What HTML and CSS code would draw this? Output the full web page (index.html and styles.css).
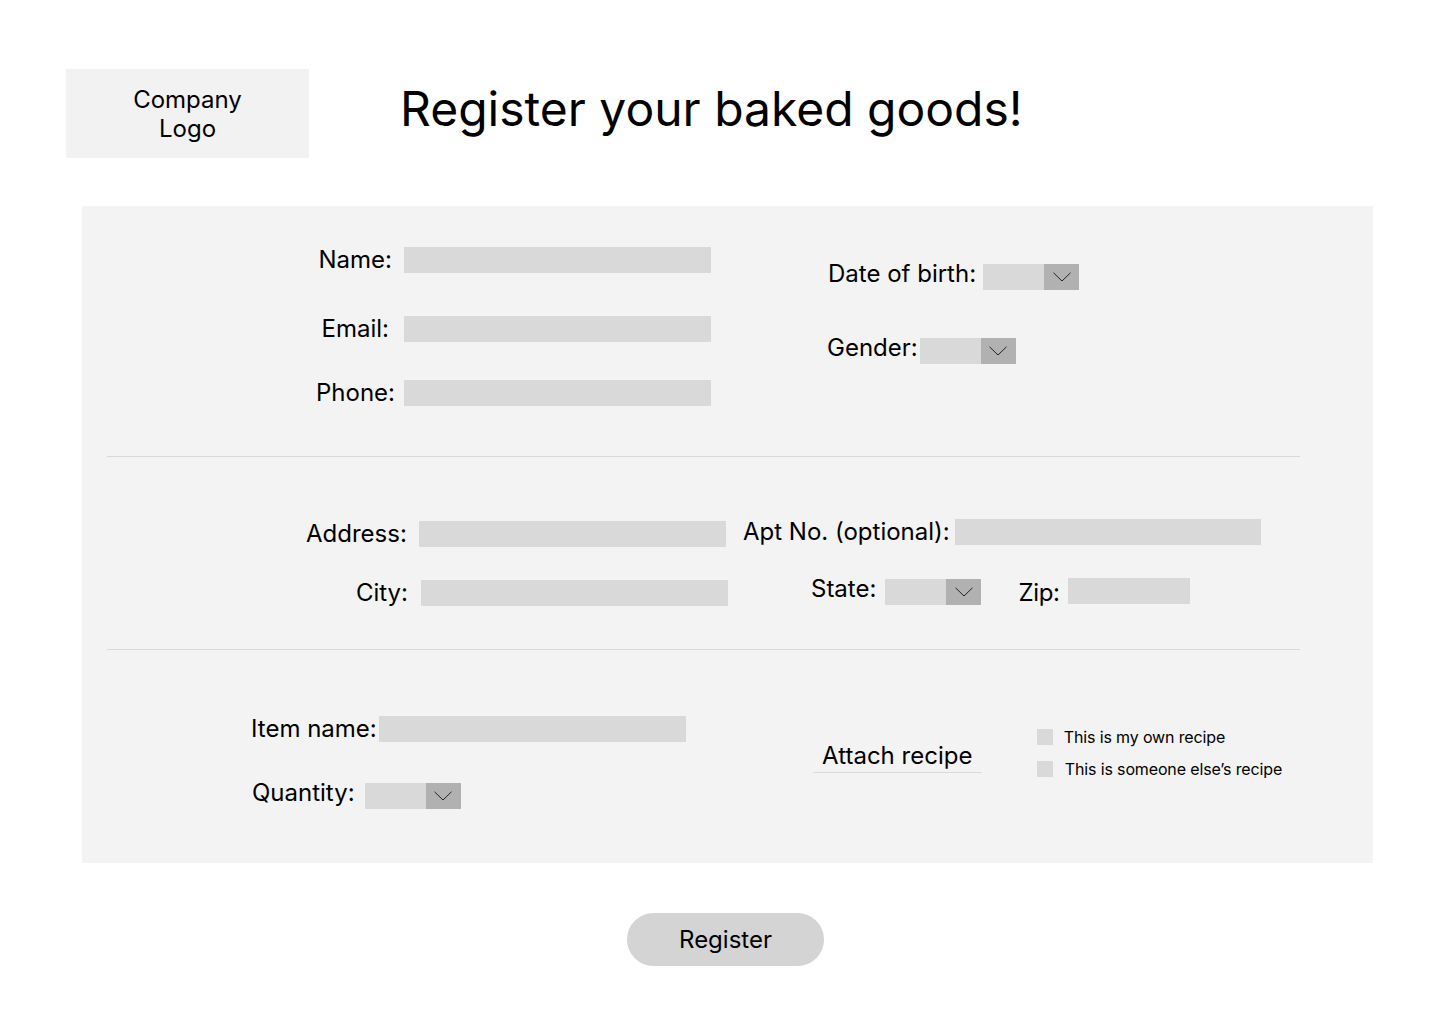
FILE: index.html
```html
<!DOCTYPE html>
<html lang="en">
<head>
<meta charset="utf-8">
<title>Register your baked goods!</title>
<link rel="stylesheet" href="styles.css">
</head>
<body>
<header class="header">
  <div class="logo">Company<br>Logo</div>
  <h1 class="title">Register your baked goods!</h1>
</header>

<main class="panel">
  <section class="sec1">
    <div class="contact-grid">
      <label class="lbl lbl-right lbl-name">Name:</label><div class="input w307"></div>
      <label class="lbl lbl-right lbl-email">Email:</label><div class="input w307"></div>
      <label class="lbl lbl-right">Phone:</label><div class="input w307"></div>
    </div>
    <div class="personal">
      <div class="prow prow-dob">
        <label class="lbl lbl-up">Date of birth:</label>
        <div class="select">
          <div class="select-field"></div>
          <div class="select-btn"><svg width="18" height="10" viewBox="0 0 18 10"><polyline points="0.5,0.8 9,9 17.5,0.8" fill="none" stroke="#222" stroke-width="1"/></svg></div>
        </div>
      </div>
      <div class="prow prow-gender">
        <label class="lbl lbl-up">Gender:</label>
        <div class="select">
          <div class="select-field"></div>
          <div class="select-btn"><svg width="18" height="10" viewBox="0 0 18 10"><polyline points="0.5,0.8 9,9 17.5,0.8" fill="none" stroke="#222" stroke-width="1"/></svg></div>
        </div>
      </div>
    </div>
  </section>

  <div class="divider"></div>

  <section class="sec2">
    <div class="arow arow-1">
      <label class="lbl lbl-right lbl-addr">Address:</label>
      <div class="input w307"></div>
      <div class="apt">
        <label class="lbl">Apt No. (optional):</label>
        <div class="input w306"></div>
      </div>
    </div>
    <div class="arow arow-2">
      <label class="lbl lbl-right lbl-city">City:</label>
      <div class="input w307"></div>
      <label class="lbl lbl-up lbl-state">State:</label>
      <div class="select">
        <div class="select-field"></div>
        <div class="select-btn"><svg width="18" height="10" viewBox="0 0 18 10"><polyline points="0.5,0.8 9,9 17.5,0.8" fill="none" stroke="#222" stroke-width="1"/></svg></div>
      </div>
      <label class="lbl lbl-zip">Zip:</label>
      <div class="input w122"></div>
    </div>
  </section>

  <div class="divider"></div>

  <section class="sec3">
    <div class="item-col">
      <div class="irow irow-item">
        <label class="lbl">Item name:</label>
        <div class="input w307"></div>
      </div>
      <div class="irow irow-qty">
        <label class="lbl lbl-up">Quantity:</label>
        <div class="select">
          <div class="select-field"></div>
          <div class="select-btn"><svg width="18" height="10" viewBox="0 0 18 10"><polyline points="0.5,0.8 9,9 17.5,0.8" fill="none" stroke="#222" stroke-width="1"/></svg></div>
        </div>
      </div>
    </div>
    <div class="attach">Attach recipe</div>
    <div class="checks">
      <div class="check"><span class="box"></span><span class="check-text">This is my own recipe</span></div>
      <div class="check check-2"><span class="box"></span><span class="check-text">This is someone else’s recipe</span></div>
    </div>
  </section>
</main>

<div class="actions">
  <button class="register" type="button">Register</button>
</div>
</body>
</html>
```

FILE: styles.css
```css
* { box-sizing: border-box; }

body {
  margin: 0;
  width: 1440px;
  min-height: 1024px;
  background: #ffffff;
  color: #000000;
  font-family: Inter, "Noto Sans", "Liberation Sans", sans-serif;
}

/* Header */
.header {
  display: flex;
  align-items: center;
  padding: 69px 0 0 66px;
}

.logo {
  width: 243px;
  height: 89px;
  background: #f2f2f2;
  display: flex;
  align-items: center;
  justify-content: center;
  text-align: center;
  font-size: 24px;
  line-height: 29px;
}

.title {
  margin: 0 0 10px 91px;
  font-size: 48px;
  font-weight: 400;
  line-height: 58px;
}

/* Panel */
.panel {
  margin: 48px 0 0 82px;
  width: 1291px;
  height: 657px;
  background: #f3f3f3;
  display: flex;
  flex-direction: column;
}

.divider {
  height: 1px;
  width: 1193px;
  margin-left: 25px;
  background: #d9d9d9;
  flex: none;
}

.lbl {
  font-size: 24px;
  line-height: 26px;
  white-space: nowrap;
}

.lbl-right { text-align: right; }
.lbl-up { margin-bottom: 6px; }

.input {
  height: 26px;
  background: #d9d9d9;
  flex: none;
}
.w307 { width: 307px; }
.w306 { width: 306px; }
.w122 { width: 122px; }

.select {
  display: flex;
  width: 96px;
  height: 26px;
  flex: none;
}
.select-field {
  flex: 1;
  background: #d9d9d9;
}
.select-btn {
  width: 35px;
  background: #b1b1b1;
  display: flex;
  align-items: center;
  justify-content: center;
}
.select-btn svg { display: block; }

/* Section 1 */
.sec1 {
  height: 250px;
  padding-top: 41px;
  display: flex;
  align-items: flex-start;
}

.contact-grid {
  margin-left: 234px;
  display: grid;
  grid-template-columns: 78px 307px;
  grid-template-rows: 69px 64px 26px;
  column-gap: 10px;
  align-items: start;
}
.lbl-name { padding-right: 2px; }
.lbl-email { padding-right: 5px; }

.personal {
  margin-left: 116px;
  padding-top: 17px;
  display: flex;
  flex-direction: column;
}
.prow {
  display: flex;
  align-items: center;
  height: 26px;
}
.prow-dob { margin-left: 1px; gap: 7px; }
.prow-gender { margin-top: 48px; gap: 2px; }

/* Section 2 */
.sec2 {
  height: 192px;
  padding-top: 64px;
  padding-left: 224px;
  display: flex;
  flex-direction: column;
}
.arow {
  display: flex;
  align-items: center;
  height: 26px;
}
.lbl-addr { width: 100px; margin-right: 13px; }
.apt {
  display: flex;
  align-items: center;
  gap: 5px;
  margin-left: 17px;
  margin-top: -4px;
}
.arow-2 { margin-top: 33px; }
.lbl-city { width: 102px; margin-right: 13px; }
.lbl-state { margin-left: 83px; margin-right: 9px; margin-top: -2px; }
.arow-2 > .select { margin-top: -2px; }
.lbl-zip { margin-left: 37px; margin-right: 8px; letter-spacing: -0.3px; }
.arow-2 > .w122 { margin-top: -4px; }

/* Section 3 */
.sec3 {
  flex: 1;
  display: flex;
  align-items: flex-start;
}
.item-col {
  margin-left: 169px;
  padding-top: 66px;
  display: flex;
  flex-direction: column;
}
.irow {
  display: flex;
  align-items: center;
  height: 26px;
}
.irow-item { gap: 2px; }
.irow-qty { margin-top: 41px; margin-left: 1px; gap: 10px; }

.attach {
  margin-left: 127px;
  margin-top: 91px;
  width: 169px;
  text-align: center;
  font-size: 24px;
  line-height: 29px;
  padding-bottom: 2px;
  border-bottom: 1px solid #d9d9d9;
}

.checks {
  margin-left: 55px;
  margin-top: 79px;
  display: flex;
  flex-direction: column;
}
.check {
  display: flex;
  align-items: center;
  gap: 11px;
  height: 16px;
}
.check-2 { margin-top: 16px; gap: 12px; }
.box {
  width: 16px;
  height: 16px;
  background: #d9d9d9;
  flex: none;
}
.check-text {
  font-size: 16px;
  line-height: 16px;
  letter-spacing: -0.14px;
  white-space: nowrap;
}

/* Actions */
.actions {
  margin: 50px 0 0 82px;
  width: 1291px;
  padding-right: 4px;
  display: flex;
  justify-content: center;
}
.register {
  width: 197px;
  height: 53px;
  border: none;
  border-radius: 27px;
  background: #d4d4d4;
  color: #000;
  font-family: Inter, "Noto Sans", "Liberation Sans", sans-serif;
  font-size: 24px;
  line-height: 29px;
  padding: 0;
}
```
